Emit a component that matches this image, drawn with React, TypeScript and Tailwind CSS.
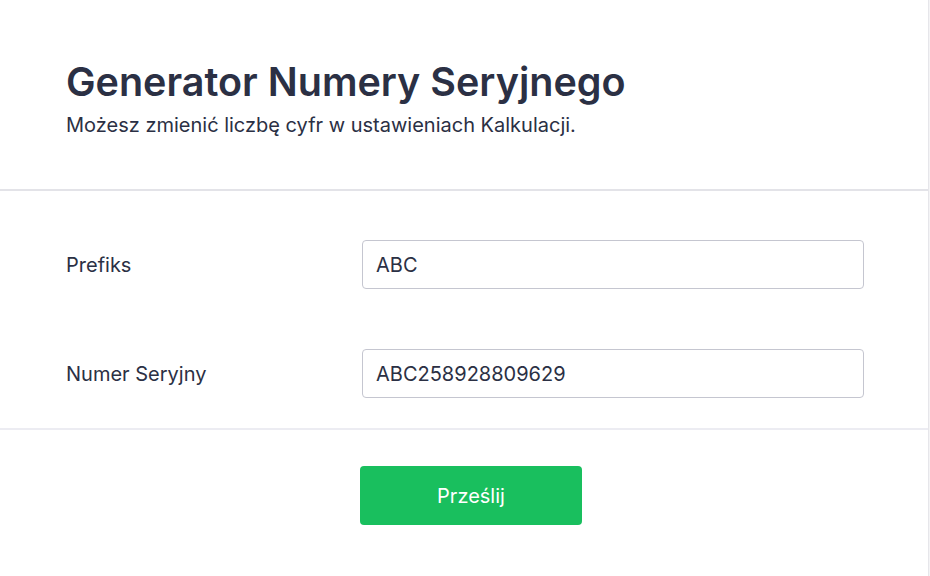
import React from "react";

const Field = ({ label, value }: { label: string; value: string }) => (
  <div className="flex items-center h-[49px]">
    <label className="w-[296px] shrink-0 text-[20px] text-[#2b3044]">{label}</label>
    <input
      readOnly
      value={value}
      className="w-[502px] shrink-0 h-[49px] rounded-[4px] border border-[#c5c6d0] px-[13px] text-[20px] text-[#2b3044] outline-none"
    />
  </div>
);

export default function App() {
  return (
    <div className="min-h-[576px] w-[930px] bg-[#f4f4f6]" style={{ fontFamily: "Inter, 'Noto Sans', sans-serif" }}>
      <div className="w-[929px] min-h-[576px] bg-white border-r border-[#e6e6ea]">
        <div className="px-[66px] pt-[58px] pb-[50px] border-b-2 border-[#e3e3e8]">
          <h1 className="text-[39.5px] leading-[48px] font-semibold text-[#2b3044]">Generator Numery Seryjnego</h1>
          <p className="mt-[5px] text-[20px] leading-[28px] text-[#2b3044]">Możesz zmienić liczbę cyfr w ustawieniach Kalkulacji.</p>
        </div>
        <div className="pl-[66px] pr-[60px] pt-[49px] pb-[30px] flex flex-col gap-[60px] border-b-2 border-[#ececf2]">
          <Field label="Prefiks" value="ABC" />
          <Field label="Numer Seryjny" value="ABC258928809629" />
        </div>
        <div className="flex pt-[36px] pl-[360px]">
          <button className="w-[222px] h-[59px] rounded-[4px] bg-[#19bf5e] text-white text-[20px]">Prześlij</button>
        </div>
      </div>
    </div>
  );
}
